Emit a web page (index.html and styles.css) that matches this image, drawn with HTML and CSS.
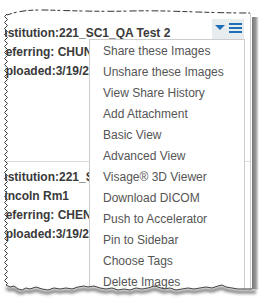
FILE: index.html
```html
<!DOCTYPE html>
<html lang="en">
<head>
    <meta charset="UTF-8">
    <title>Study list menu</title>
    <link rel="stylesheet" href="styles.css">
</head>
<body>
    <div class="frame">
        <div class="panel">
            <div class="card card-first">
                <div class="card-head">
                    <div class="line title">Institution:221_SC1_QA Test 2</div>
                    <div class="tools">
                        <svg width="32" height="20" viewBox="0 0 32 20">
                            <polygon points="3,6 13,6 8,11" fill="#1d6fb8"/>
                            <rect x="17" y="4" width="13" height="2" fill="#1d6fb8"/>
                            <rect x="17" y="8" width="13" height="2" fill="#1d6fb8"/>
                            <rect x="17" y="12" width="13" height="2" fill="#1d6fb8"/>
                        </svg>
                    </div>
                </div>
                <div class="line">Referring: CHUNG</div>
                <div class="line">Uploaded:3/19/2019</div>
            </div>
            <div class="card">
                <div class="line">Institution:221_SC1_QA Test 2</div>
                <div class="line">Lincoln Rm1</div>
                <div class="line">Referring: CHENG</div>
                <div class="line">Uploaded:3/19/2019</div>
            </div>
        </div>
        <div class="edge"></div>
        <div class="shadow"></div>

        <ul class="menu">
            <li>Share these Images</li>
            <li>Unshare these Images</li>
            <li>View Share History</li>
            <li>Add Attachment</li>
            <li>Basic View</li>
            <li>Advanced View</li>
            <li>Visage&reg; 3D Viewer</li>
            <li>Download DICOM</li>
            <li>Push to Accelerator</li>
            <li>Pin to Sidebar</li>
            <li>Choose Tags</li>
            <li>Delete Images</li>
        </ul>

        <!-- torn paper edges drawn on top -->
        <svg class="torn" width="270" height="303" viewBox="0 0 270 303">
            <defs>
                <pattern id="zig" x="0" y="0" width="10" height="6" patternUnits="userSpaceOnUse">
                    <path d="M6,0 Q9,1.5 6,3 Q3,4.5 6,6" fill="none" stroke="#3a3a3a" stroke-width="1"/>
                </pattern>
                <filter id="blur" x="-5%" y="-100%" width="110%" height="300%">
                    <feGaussianBlur stdDeviation="1.6"/>
                </filter>
            </defs>
            <rect x="0" y="0" width="5" height="303" fill="#fff"/>
            <rect x="0" y="0" width="270" height="12" fill="#fff"/>
            <rect x="0" y="14" width="10" height="272" fill="url(#zig)"/>
            <path d="M7,15 C18,11 28,10 42,10 S 90,12 130,11 S 200,13 250,13" fill="none" stroke="#333" stroke-width="1" stroke-dasharray="5 2 3 3 7 2"/>
            <path d="M0,285 L6,285 L10,287 L14,286 L18,289 L22,290 L26,288 L30,289 L36,287 L42,289 L48,290 L54,288 L60,289 L66,288 L72,289 L78,287 L84,286 L88,287 L94,286 L100,288 L106,289 L112,288 L118,290 L124,289 L130,290 L136,288 L142,289 L148,288 L154,286 L158,287 L164,289 L170,288 L176,290 L182,289 L188,288 L194,289 L200,288 L206,287 L212,288 L218,286 L222,285 L226,287 L232,288 L238,289 L244,289 L252,289 L260,290 L270,290 L270,303 L0,303 Z" fill="#fff"/>
            <path d="M6,288 L10,290 L14,289 L18,292 L22,293 L26,291 L30,292 L36,290 L42,292 L48,293 L54,291 L60,292 L66,291 L72,292 L78,290 L84,289 L88,290 L94,289 L100,291 L106,292 L112,291 L118,293 L124,292 L130,293 L136,291 L142,292 L148,291 L154,289 L158,290 L164,292 L170,291 L176,293 L182,292 L188,291 L194,292 L200,291 L206,290 L212,291 L218,289 L222,288 L226,290 L232,291 L238,292 L244,292 L256,292" fill="none" stroke="#777" stroke-width="3" filter="url(#blur)"/>
            <path d="M6,285 L10,287 L14,286 L18,289 L22,290 L26,288 L30,289 L36,287 L42,289 L48,290 L54,288 L60,289 L66,288 L72,289 L78,287 L84,286 L88,287 L94,286 L100,288 L106,289 L112,288 L118,290 L124,289 L130,290 L136,288 L142,289 L148,288 L154,286 L158,287 L164,289 L170,288 L176,290 L182,289 L188,288 L194,289 L200,288 L206,287 L212,288 L218,286 L222,285 L226,287 L232,288 L238,289 L244,289 L252,289" fill="none" stroke="#444" stroke-width="1"/>
        </svg>
    </div>
</body>
</html>
```

FILE: styles.css
```css
body {
    margin: 0;
    background-color: #fff;
    font-family: "Liberation Sans", Arial, sans-serif;
}

.frame {
    position: relative;
    display: flex;
    width: 270px;
    height: 303px;
    padding: 13px 0 0 5px;
    box-sizing: border-box;
    overflow: hidden;
}

.panel {
    width: 246px;
    height: 277px;
    border-right: 1px solid #cfcfcf;
    box-sizing: border-box;
    overflow: hidden;
    background-color: #fff;
}

.edge {
    width: 1px;
}

.shadow {
    width: 7px;
    height: 274px;
    margin-top: 4px;
    background: linear-gradient(to right, #777, #9a9a9a 55%, #fff);
}

.card {
    padding-top: 6px;
}

.card-first {
    height: 149px;
    border-bottom: 1px solid #dcdcdc;
    box-sizing: border-box;
}

.card-head {
    display: flex;
    align-items: flex-start;
}

.line {
    margin-left: -8px;
    font-size: 12px;
    font-weight: bold;
    line-height: 19px;
    color: #3a3a3a;
    white-space: nowrap;
}

.title {
    flex: 1;
    margin-top: 4.5px;
}

.tools {
    width: 32px;
    height: 20px;
    margin-right: 6px;
    background-color: #e7ecef;
}

.tools svg {
    display: block;
}

.menu {
    position: absolute;
    left: 89px;
    top: 39px;
    width: 156px;
    margin: 0;
    padding: 1px 0 0 0;
    list-style: none;
    background-color: #fff;
    border: 1px solid #cdcdcd;
    box-sizing: border-box;
}

.menu li {
    padding-left: 13px;
    font-size: 12px;
    line-height: 21px;
    color: #555;
    white-space: nowrap;
}

.torn {
    position: absolute;
    left: 0;
    top: 0;
}
```
